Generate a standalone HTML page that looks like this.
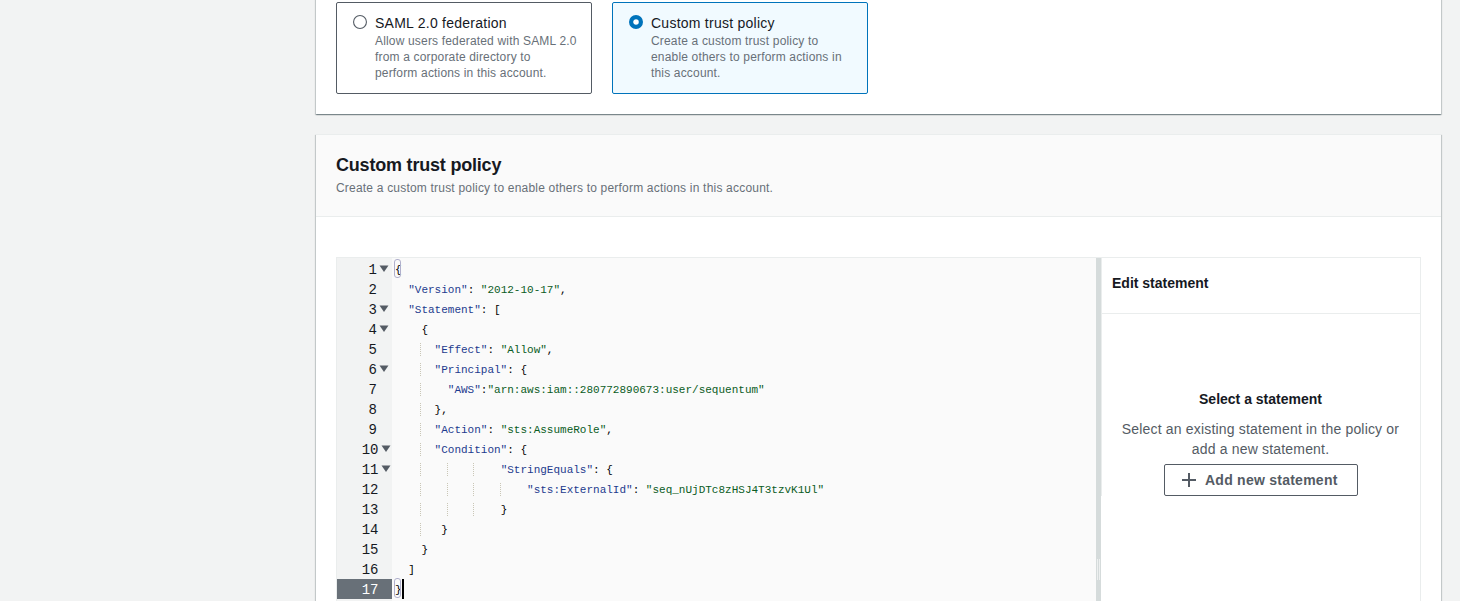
<!DOCTYPE html>
<html>
<head>
<meta charset="utf-8">
<style>
*{box-sizing:border-box;}
html,body{margin:0;padding:0;}
body{width:1460px;height:601px;overflow:hidden;background:#f2f3f3;position:relative;font-family:"Liberation Sans",sans-serif;color:#16191f;}
.c1{position:absolute;left:316px;top:-40px;width:1125px;height:154px;background:#fff;box-shadow:0 1px 1px 0 rgba(0,28,36,.3),1px 1px 1px 0 rgba(0,28,36,.15),-1px 1px 1px 0 rgba(0,28,36,.15);}
.tile{position:absolute;top:2px;width:256px;height:92px;border:1px solid #545b64;border-radius:2px;background:#fff;}
.tile.sel{border-color:#0073bb;background:#f1faff;}
.radio{position:absolute;left:16px;top:12px;width:14px;height:14px;}
.tt{position:absolute;left:38px;top:10px;font-size:14px;line-height:20px;white-space:nowrap;letter-spacing:0.25px;}
.td{position:absolute;left:38px;top:30px;font-size:12px;line-height:16px;color:#687078;white-space:nowrap;letter-spacing:0.17px;}
.c2{position:absolute;left:316px;top:134px;width:1125px;height:500px;background:#fff;box-shadow:0 1px 1px 0 rgba(0,28,36,.3),1px 1px 1px 0 rgba(0,28,36,.15),-1px 1px 1px 0 rgba(0,28,36,.15);border-top:1px solid #eaeded;}
.hdr{position:absolute;left:0;top:0;width:100%;height:82px;background:#fafafa;border-bottom:1px solid #eaeded;}
.h2{position:absolute;left:20px;top:19px;font-size:18px;line-height:22px;font-weight:700;white-space:nowrap;letter-spacing:-0.2px;}
.hd{position:absolute;left:20px;top:45px;font-size:12px;line-height:16px;color:#687078;white-space:nowrap;letter-spacing:0.2px;}
.ed{position:absolute;left:336px;top:257px;width:1085px;height:400px;border:1px solid #eaeded;background:#fafafa;}
.gut{position:absolute;left:0;top:0;width:55px;height:100%;background:#f2f3f3;}
.ln{position:absolute;left:0;width:40px;height:20px;text-align:right;font-family:"Liberation Mono",monospace;font-size:14px;line-height:20px;color:#16191f;padding-top:1px;}
.ln.act{background:#687078;color:#fff;width:55px;padding-right:13.5px;}
.fold{position:absolute;left:42px;width:10px;height:7px;}
.code{position:absolute;left:58px;top:1px;font-family:"Liberation Mono",monospace;font-size:11px;}
.row{position:absolute;left:0;height:20px;line-height:20px;white-space:pre;color:#16191f;}
.k{color:#1d3a8e;}
.s{color:#0a5c24;}
.p{color:#000;}
.o{color:#000;}
.guide{position:absolute;width:1px;height:13px;background-image:linear-gradient(#c9c6b6 50%,transparent 50%);background-size:1px 2px;}
.bm{position:absolute;width:7px;height:19px;border:1px solid #b0b0cc;border-radius:3px;}
.cur{position:absolute;width:2px;height:20px;background:#000;}
.grip{position:absolute;left:1px;top:301px;width:3px;height:21px;border-left:1px solid #eef0f0;border-right:1px solid #eef0f0;}
.div{position:absolute;left:759px;top:0;width:5px;height:100%;background:#d5dbdb;}
.pan{position:absolute;left:764px;top:0;width:320px;height:100%;background:#fff;border-right:1px solid #eaeded;}
.ph{position:absolute;left:0;top:0;width:100%;height:56px;border-bottom:1px solid #eaeded;}
.pht{position:absolute;left:11px;top:15px;font-size:14px;font-weight:700;line-height:20px;white-space:nowrap;}
.sel-t{position:absolute;left:0;width:100%;text-align:center;font-weight:700;font-size:14px;line-height:20px;}
.sel-d{position:absolute;left:0;width:100%;text-align:center;font-size:14px;line-height:20px;color:#545b64;letter-spacing:0.18px;}
.btn{position:absolute;left:63px;top:206px;width:194px;height:32px;border:1px solid #545b64;border-radius:2px;background:#fff;}
.btnt{position:absolute;left:40px;top:5px;font-size:14px;font-weight:700;line-height:20px;color:#545b64;white-space:nowrap;letter-spacing:0.25px;}
</style>
</head>
<body>
<div class="c1">
  <div class="tile" style="left:20px;top:42px;">
    <svg class="radio" viewBox="0 0 14 14"><circle cx="7" cy="7" r="6.44" fill="#fff" stroke="#545b64" stroke-width="1.1"/></svg>
    <div class="tt">SAML 2.0 federation</div>
    <div class="td">Allow users federated with SAML 2.0<br>from a corporate directory to<br>perform actions in this account.</div>
  </div>
  <div class="tile sel" style="left:296px;top:42px;">
    <svg class="radio" viewBox="0 0 14 14"><circle cx="7" cy="7" r="4.9" fill="#fff" stroke="#0073bb" stroke-width="4.2"/></svg>
    <div class="tt">Custom trust policy</div>
    <div class="td">Create a custom trust policy to<br>enable others to perform actions in<br>this account.</div>
  </div>
</div>

<div class="c2">
  <div class="hdr">
    <div class="h2">Custom trust policy</div>
    <div class="hd">Create a custom trust policy to enable others to perform actions in this account.</div>
  </div>
</div>

<div class="ed" id="ed">
  <div class="gut" id="gut">
<div class="ln" style="top:1px">1</div>
<svg class="fold" style="top:7px;left:42px" viewBox="0 0 10 7"><path d="M0.5 0.5h9L5 7z" fill="#545b64"/></svg>
<div class="ln" style="top:21px">2</div>
<div class="ln" style="top:41px">3</div>
<svg class="fold" style="top:47px;left:42px" viewBox="0 0 10 7"><path d="M0.5 0.5h9L5 7z" fill="#545b64"/></svg>
<div class="ln" style="top:61px">4</div>
<svg class="fold" style="top:67px;left:42px" viewBox="0 0 10 7"><path d="M0.5 0.5h9L5 7z" fill="#545b64"/></svg>
<div class="ln" style="top:81px">5</div>
<div class="ln" style="top:101px">6</div>
<svg class="fold" style="top:107px;left:42px" viewBox="0 0 10 7"><path d="M0.5 0.5h9L5 7z" fill="#545b64"/></svg>
<div class="ln" style="top:121px">7</div>
<div class="ln" style="top:141px">8</div>
<div class="ln" style="top:161px">9</div>
<div class="ln" style="top:181px;width:41.5px">10</div>
<svg class="fold" style="top:187px;left:44px" viewBox="0 0 10 7"><path d="M0.5 0.5h9L5 7z" fill="#545b64"/></svg>
<div class="ln" style="top:201px;width:41.5px">11</div>
<svg class="fold" style="top:207px;left:44px" viewBox="0 0 10 7"><path d="M0.5 0.5h9L5 7z" fill="#545b64"/></svg>
<div class="ln" style="top:221px;width:41.5px">12</div>
<div class="ln" style="top:241px;width:41.5px">13</div>
<div class="ln" style="top:261px;width:41.5px">14</div>
<div class="ln" style="top:281px;width:41.5px">15</div>
<div class="ln" style="top:301px;width:41.5px">16</div>
<div class="ln act" style="top:321px">17</div>
</div>
  <div class="code" id="code">
<div class="guide" style="left:25.4px;top:84px"></div>
<div class="guide" style="left:25.4px;top:104px"></div>
<div class="guide" style="left:25.4px;top:124px"></div>
<div class="guide" style="left:25.4px;top:144px"></div>
<div class="guide" style="left:25.4px;top:164px"></div>
<div class="guide" style="left:25.4px;top:184px"></div>
<div class="guide" style="left:25.4px;top:204px"></div>
<div class="guide" style="left:51.8px;top:204px"></div>
<div class="guide" style="left:78.2px;top:204px"></div>
<div class="guide" style="left:25.4px;top:224px"></div>
<div class="guide" style="left:51.8px;top:224px"></div>
<div class="guide" style="left:78.2px;top:224px"></div>
<div class="guide" style="left:104.6px;top:224px"></div>
<div class="guide" style="left:25.4px;top:244px"></div>
<div class="guide" style="left:51.8px;top:244px"></div>
<div class="guide" style="left:78.2px;top:244px"></div>
<div class="guide" style="left:25.4px;top:264px"></div>
<div class="row" style="top:1px"><span class="p">{</span></div>
<div class="row" style="top:21px">  <span class="k">"Version"</span><span class="o">: </span><span class="s">"2012-10-17"</span><span class="o">,</span></div>
<div class="row" style="top:41px">  <span class="k">"Statement"</span><span class="o">: </span><span class="p">[</span></div>
<div class="row" style="top:61px">    <span class="p">{</span></div>
<div class="row" style="top:81px">      <span class="k">"Effect"</span><span class="o">: </span><span class="s">"Allow"</span><span class="o">,</span></div>
<div class="row" style="top:101px">      <span class="k">"Principal"</span><span class="o">: </span><span class="p">{</span></div>
<div class="row" style="top:121px">        <span class="k">"AWS"</span><span class="o">:</span><span class="s">"arn:aws:iam::280772890673:user/sequentum"</span></div>
<div class="row" style="top:141px">      <span class="p">}</span><span class="o">,</span></div>
<div class="row" style="top:161px">      <span class="k">"Action"</span><span class="o">: </span><span class="s">"sts:AssumeRole"</span><span class="o">,</span></div>
<div class="row" style="top:181px">      <span class="k">"Condition"</span><span class="o">: </span><span class="p">{</span></div>
<div class="row" style="top:201px">                <span class="k">"StringEquals"</span><span class="o">: </span><span class="p">{</span></div>
<div class="row" style="top:221px">                    <span class="k">"sts:ExternalId"</span><span class="o">: </span><span class="s">"seq_nUjDTc8zHSJ4T3tzvK1Ul"</span></div>
<div class="row" style="top:241px">                <span class="p">}</span></div>
<div class="row" style="top:261px">       <span class="p">}</span></div>
<div class="row" style="top:281px">    <span class="p">}</span></div>
<div class="row" style="top:301px">  <span class="p">]</span></div>
<div class="row" style="top:321px"><span class="p">}</span></div>
</div>
  <div class="bm" style="left:57px;top:1px"></div>
  <div class="bm" style="left:57px;top:320px;height:20px"></div>
  <div class="cur" style="left:65px;top:321px"></div>
  <div class="div"><div class="grip"></div></div>
  <div class="pan">
    <div style="position:absolute;left:0;top:0;width:1px;height:238px;background:#eaeded"></div>
    <div class="ph"><div class="pht">Edit statement</div></div>
    <div class="sel-t" style="top:131px;">Select a statement</div>
    <div class="sel-d" style="top:161px;">Select an existing statement in the policy or<br>add a new statement.</div>
    <div class="btn">
      <svg style="position:absolute;left:16px;top:7px" width="16" height="16" viewBox="0 0 16 16"><path d="M8 1v14M1 8h14" stroke="#545b64" stroke-width="2" fill="none"/></svg>
      <div class="btnt">Add new statement</div>
    </div>
  </div>
</div>
</body>
</html>
